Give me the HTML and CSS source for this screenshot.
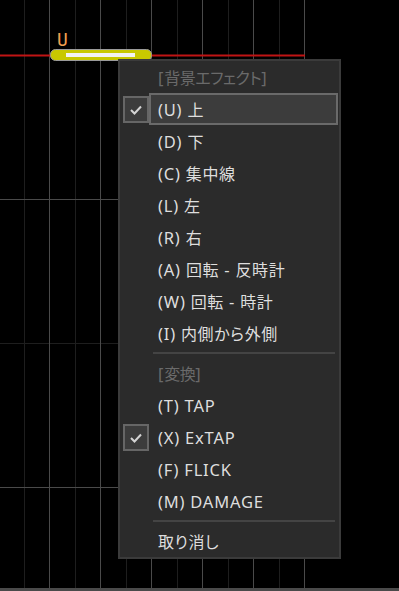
FILE: index.html
```html
<!DOCTYPE html>
<html lang="ja">
<head>
    <meta charset="UTF-8">
    <meta name="viewport" content="width=device-width, initial-scale=1.0">
    <title>Timeline - Context Menu</title>
    <link rel="stylesheet" href="styles.css">
</head>
<body>
    <div class="editor">
        <svg class="timeline" width="399" height="591" viewBox="0 0 399 591">
            <g class="grid-dark">
                <line x1="24.5" y1="0" x2="24.5" y2="588"/>
                <line x1="75.5" y1="0" x2="75.5" y2="588"/>
                <line x1="126.5" y1="0" x2="126.5" y2="588"/>
                <line x1="177.5" y1="0" x2="177.5" y2="588"/>
                <line x1="228.5" y1="0" x2="228.5" y2="588"/>
                <line x1="279.5" y1="0" x2="279.5" y2="588"/>
                <line x1="0" y1="343.5" x2="305" y2="343.5"/>
            </g>
            <g class="grid-light">
                <line x1="49.5" y1="0" x2="49.5" y2="588"/>
                <line x1="100.5" y1="0" x2="100.5" y2="588"/>
                <line x1="151.5" y1="0" x2="151.5" y2="588"/>
                <line x1="202.5" y1="0" x2="202.5" y2="588"/>
                <line x1="253.5" y1="0" x2="253.5" y2="588"/>
                <line x1="304.5" y1="0" x2="304.5" y2="588"/>
                <line x1="0" y1="199.5" x2="305" y2="199.5"/>
                <line x1="0" y1="487.5" x2="305" y2="487.5"/>
            </g>
            <line class="cursor-line" x1="0" y1="55.5" x2="305" y2="55.5"/>
            <rect class="note" x="50.5" y="49.5" width="101" height="11" rx="5"/>
            <rect class="note-inner" x="66" y="53" width="69" height="4"/>
            <text class="note-label" x="57" y="46">U</text>
            <rect class="footer-bar" x="0" y="588" width="399" height="3"/>
        </svg>

        <div class="menu">
            <div class="item header">
                <div class="check"></div>
                <div class="label">[<span class="ja">背景エフェクト</span>]</div>
            </div>
            <div class="item">
                <div class="check"><span class="check-box"><svg width="22" height="23" viewBox="0 0 22 23"><path d="M6 12 L9.5 15.5 L16 8.5"/></svg></span></div>
                <div class="label active">(U)&nbsp;<span class="ja">上</span></div>
            </div>
            <div class="item"><div class="check"></div><div class="label">(D)&nbsp;<span class="ja">下</span></div></div>
            <div class="item"><div class="check"></div><div class="label">(C)&nbsp;<span class="ja">集中線</span></div></div>
            <div class="item"><div class="check"></div><div class="label">(L)&nbsp;<span class="ja">左</span></div></div>
            <div class="item"><div class="check"></div><div class="label">(R)&nbsp;<span class="ja">右</span></div></div>
            <div class="item"><div class="check"></div><div class="label">(A)&nbsp;<span class="ja">回転</span>&nbsp;-&nbsp;<span class="ja">反時計</span></div></div>
            <div class="item"><div class="check"></div><div class="label">(W)&nbsp;<span class="ja">回転</span>&nbsp;-&nbsp;<span class="ja">時計</span></div></div>
            <div class="item"><div class="check"></div><div class="label">(I)&nbsp;<span class="ja">内側から外側</span></div></div>
            <div class="sep"><span></span></div>
            <div class="item header">
                <div class="check"></div>
                <div class="label">[<span class="ja">変換</span>]</div>
            </div>
            <div class="item"><div class="check"></div><div class="label">(T) TAP</div></div>
            <div class="item">
                <div class="check"><span class="check-box"><svg width="22" height="23" viewBox="0 0 22 23"><path d="M6 12 L9.5 15.5 L16 8.5"/></svg></span></div>
                <div class="label">(X) ExTAP</div>
            </div>
            <div class="item"><div class="check"></div><div class="label">(F) FLICK</div></div>
            <div class="item"><div class="check"></div><div class="label">(M) DAMAGE</div></div>
            <div class="sep"><span></span></div>
            <div class="item"><div class="check"></div><div class="label"><span class="ja">取り消し</span></div></div>
        </div>
    </div>
</body>
</html>
```

FILE: styles.css
```css
body {
    margin: 0;
    background-color: #000;
    font-family: "Noto Sans", "Noto Sans CJK JP", sans-serif;
    overflow: hidden;
}
.editor {
    position: relative;
    width: 399px;
    height: 591px;
    background-color: #000;
}
.timeline {
    display: block;
}
.grid-dark line {
    stroke: #1e1e1e;
    stroke-width: 1;
}
.grid-light line {
    stroke: #4a4a4a;
    stroke-width: 1;
}
.cursor-line {
    stroke: #c01414;
    stroke-width: 2;
}
.note {
    fill: #c8c800;
    stroke: #9a9a9a;
    stroke-width: 1;
}
.note-inner {
    fill: #f2f2f2;
}
.note-label {
    fill: #f0a050;
    font-family: "DejaVu Sans Mono", monospace;
    font-size: 18px;
}
.footer-bar {
    fill: #4a4a4a;
}
.menu {
    position: absolute;
    left: 118px;
    top: 59px;
    width: 223px;
    box-sizing: border-box;
    border: 2px solid #3b3b3b;
    background-color: #2b2b2b;
    color: #dedede;
    font-size: 16.5px;
    letter-spacing: 0.8px;
}
.ja {
    font-family: "Noto Sans CJK JP", sans-serif;
    font-size: 16px;
    letter-spacing: 0.6px;
    font-feature-settings: "palt";
}
.item {
    display: flex;
    height: 32px;
}
.check {
    width: 29px;
    flex-shrink: 0;
    display: flex;
    align-items: center;
}
.check-box {
    margin-left: 3px;
    width: 26px;
    height: 27px;
    box-sizing: border-box;
    border: 2px solid #666;
    background-color: #3c3c3c;
    display: flex;
    align-items: center;
    justify-content: center;
}
.check-box path {
    fill: none;
    stroke: #d4d4d4;
    stroke-width: 2;
}
.label {
    flex: 1;
    margin-right: 1px;
    box-sizing: border-box;
    border: 2px solid transparent;
    padding-left: 7px;
    display: flex;
    align-items: center;
    white-space: nowrap;
}
.label.active {
    border-color: #6a6a6a;
    background-color: #3c3c3c;
}
.header .label {
    color: #6a6a6a;
}
.header .ja {
    letter-spacing: -0.5px;
}
.sep {
    height: 8px;
    display: flex;
    align-items: center;
    padding: 0 4px 0 33px;
}
.sep span {
    flex: 1;
    height: 2px;
    background-color: #444;
}
```
